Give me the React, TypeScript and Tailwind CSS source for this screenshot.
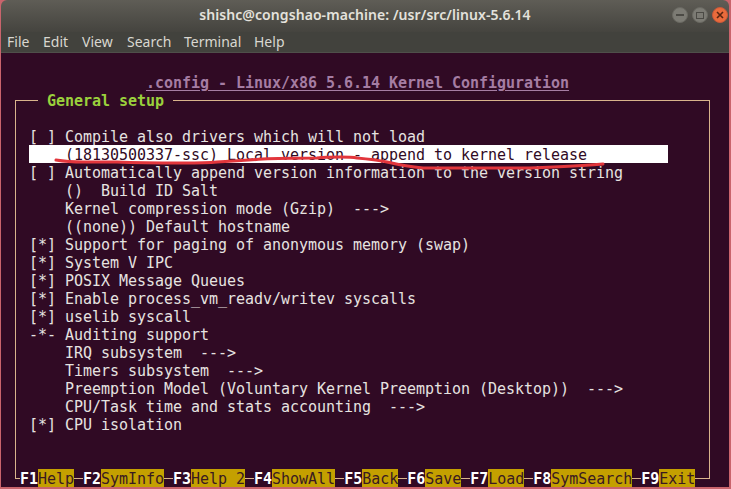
import React from 'react';

const LINE = 'bg-[#d9b48c]';

const rows = [
  '[ ] Compile also drivers which will not load',
  '__HIGHLIGHT__',
  '[ ] Automatically append version information to the version string',
  '    ()  Build ID Salt',
  '    Kernel compression mode (Gzip)  --->',
  '    ((none)) Default hostname',
  '[*] Support for paging of anonymous memory (swap)',
  '[*] System V IPC',
  '[*] POSIX Message Queues',
  '[*] Enable process_vm_readv/writev syscalls',
  '[*] uselib syscall',
  '-*- Auditing support',
  '    IRQ subsystem  --->',
  '    Timers subsystem  --->',
  '    Preemption Model (Voluntary Kernel Preemption (Desktop))  --->',
  '    CPU/Task time and stats accounting  --->',
  '[*] CPU isolation',
];

const keys = [
  { key: 'F1', label: 'Help' },
  { key: 'F2', label: 'SymInfo' },
  { key: 'F3', label: 'Help 2' },
  { key: 'F4', label: 'ShowAll' },
  { key: 'F5', label: 'Back' },
  { key: 'F6', label: 'Save' },
  { key: 'F7', label: 'Load' },
  { key: 'F8', label: 'SymSearch' },
  { key: 'F9', label: 'Exit' },
];

const WindowButton: React.FC<{ children: React.ReactNode; close?: boolean }> = ({ children, close }) => (
  <div
    className={
      close
        ? 'w-4 h-4 rounded-full flex items-center justify-center bg-[#ea6b3c] border border-[#c9583a]'
        : 'w-4 h-4 rounded-full flex items-center justify-center bg-[#7c7b74] border border-[#6a6962]'
    }
  >
    {children}
  </div>
);

const TitleBar = () => (
  <div className="relative h-[32px] flex items-center justify-center bg-gradient-to-b from-[#5f5d56] to-[#45443f] rounded-t-[6px]">
    <span className="text-[14px] font-semibold tracking-[0.07px] text-[#e4e2dc] font-['Noto_Sans',sans-serif] leading-none pb-[3px]">
      shishc@congshao-machine: /usr/src/linux-5.6.14
    </span>
    <div className="absolute right-[1px] top-[7px] flex gap-[4px]">
      <WindowButton>
        <div className="w-[8px] h-[2px] bg-[#4b4a45]" />
      </WindowButton>
      <WindowButton>
        <div className="w-[8px] h-[7px] border border-[#4b4a45]" />
      </WindowButton>
      <WindowButton close>
        <svg width="8" height="8" viewBox="0 0 8 8">
          <path d="M1 1 L7 7 M7 1 L1 7" stroke="#5a2410" strokeWidth="1.6" />
        </svg>
      </WindowButton>
    </div>
  </div>
);

const MenuBar = () => (
  <div className="h-[21px] flex items-center pl-[6px] bg-[#42423d] border-b border-[#4f4f4a] text-[14px] leading-none text-[#d9d7d0] font-['Noto_Sans',sans-serif]">
    <span className="w-[36px]">File</span>
    <span className="w-[39px]">Edit</span>
    <span className="w-[45px]">View</span>
    <span className="w-[57px]">Search</span>
    <span className="w-[70px]">Terminal</span>
    <span>Help</span>
  </div>
);

const Row: React.FC<{ children?: React.ReactNode }> = ({ children }) => (
  <div className="h-[18px] whitespace-pre">{children}</div>
);

const Menu = () => (
  <div className="ml-[13px] mr-[19px] border-x border-[#d9b48c] px-[13px] pt-[18px] pb-[36px] text-[#e6e3e0]">
    {rows.map((text) =>
      text === '__HIGHLIGHT__' ? (
        <div key={text} className="w-[639px] h-[18px] whitespace-pre bg-white text-[#300a24]">
          {'    (18130500337-ssc) Local version - append to kernel release'}
        </div>
      ) : (
        <Row key={text}>{text}</Row>
      ),
    )}
  </div>
);

const BottomBar = () => (
  <div className="flex h-[18px] ml-[13px] mr-[19px] whitespace-pre">
    <div className="w-[5px] h-[10px] border-l border-b border-[#d9b48c]" />
    {keys.map(({ key, label }) => (
      <React.Fragment key={key}>
        <span className="font-bold text-white">{key}</span>
        <span className="bg-[#c4a000] text-[#3a1a20]">{label}</span>
        <div className={`w-[9px] h-px mt-[9px] ${LINE}`} />
      </React.Fragment>
    ))}
    <div className="flex-1 h-[10px] border-r border-b border-[#d9b48c]" />
  </div>
);

const Terminal = () => (
  <div className="relative flex-1 pt-[2px] pl-[1px] bg-[#300a24] font-['DejaVu_Sans_Mono',monospace] text-[15px] leading-[21px] tracking-[-0.03px]">
    <Row />
    <div className="h-[18px] pl-[144px] whitespace-pre font-bold text-[#a57da3] underline underline-offset-2">
      .config - Linux/x86 5.6.14 Kernel Configuration
    </div>
    <div className="flex h-[18px] ml-[13px] mr-[19px] whitespace-pre">
      <div className="w-[23px] h-[9px] mt-[9px] border-l border-t border-[#d9b48c]" />
      <span className="font-bold text-[#9ad13c]"> General setup </span>
      <div className="flex-1 h-[9px] mt-[9px] border-r border-t border-[#d9b48c]" />
    </div>
    <Menu />
    <BottomBar />
    {/* red pen mark on top of the screenshot */}
    <svg className="absolute left-0 top-0 pointer-events-none" width="728" height="434" viewBox="1 53 728 434">
      <path
        d="M56 160 C 68 162 75 162 83 162 C 100 162 108 162 117 162 C 140 163 165 163 183 163 C 195 163 207 163 217 162 C 235 161 250 160 263 159 C 280 158 300 158 317 158 C 325 157 333 157 340 157 C 345 157 352 157 357 158 C 368 159 377 160 387 162 C 400 165 412 167 423 168 C 436 168 450 168 463 168 C 485 168 510 168 530 168 C 555 167 580 166 603 164"
        fill="none"
        stroke="#e2363c"
        strokeWidth="3"
        strokeLinecap="round"
      />
    </svg>
  </div>
);

export default function App() {
  return (
    <div className="w-[731px] h-[489px] flex flex-col overflow-hidden bg-[#c9646c] pl-[1px] pr-[2px] pb-[2px]">
      <TitleBar />
      <MenuBar />
      <Terminal />
    </div>
  );
}
